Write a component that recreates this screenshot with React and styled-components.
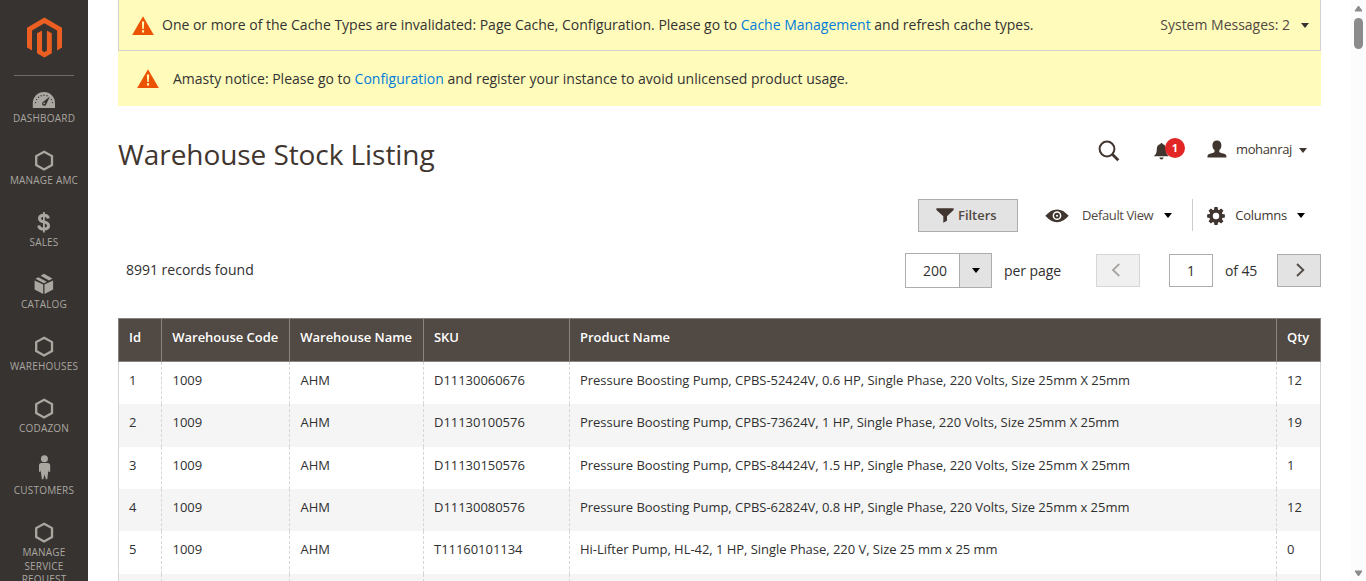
import React from "react";
import styled, { createGlobalStyle } from "styled-components";

const GlobalStyle = createGlobalStyle`
  *, *::before, *::after { box-sizing: border-box; }
  html, body { margin: 0; padding: 0; background: #fff; overflow: hidden; }
  body { font: 400 14px/1.36 "Open Sans", "Noto Sans", sans-serif; color: #41362f; letter-spacing: -0.008px; }
  a { color: #007bdb; text-decoration: none; }
  button { font-family: inherit; }
`;

const Page = styled.div`
  display: flex;
  height: 581px;
  overflow: hidden;
`;

/* Sidebar */

const Sidebar = styled.nav`
  flex: 0 0 88px;
  height: 581px;
  overflow: hidden;
  background: #373330;
`;

const LogoArea = styled.div`
  height: 76px;
  margin: 0 14px;
  padding: 17px 0 0 13px;
  border-bottom: 1px solid #736963;
  svg { display: block; }
`;

const MenuItem = styled.a`
  display: block;
  height: 62px;
  color: #aaa6a0;
  text-align: center;
  svg { display: block; margin: 0 auto; }
`;

const MenuLabel = styled.span`
  display: block;
  padding: 1px 8px 0;
  font-size: 10px;
  letter-spacing: 0.2px;
  line-height: 13.6px;
  text-transform: uppercase;
  white-space: ${(p) => (p.$wrap ? "normal" : "nowrap")};
`;

/* Content */

const Content = styled.main`
  flex: 1;
  min-width: 0;
  padding: 0 30px;
`;

const SystemMessage = styled.div`
  display: flex;
  align-items: center;
  height: 51px;
  padding: 0 11px 0 13px;
  background: #fffbbb;
  border: 1px solid #d1d1d1;
  border-top: 0;
`;

const Notice = styled.div`
  display: flex;
  align-items: center;
  height: 55px;
  padding-left: 19px;
  background: #fffbbb;
`;

const MessageText = styled.span`
  margin-left: ${(p) => p.$gap}px;
  color: #333;
`;

const MessageCount = styled.span`
  display: flex;
  align-items: center;
  gap: 11px;
  margin-left: auto;
  color: #514943;
`;

const Caret = styled.span`
  width: 0;
  height: 0;
  border: 4px solid transparent;
  border-top: 5px solid ${(p) => p.$color || "#000"};
  border-bottom: 0;
`;

const PageHeader = styled.header`
  display: flex;
  height: 92px;
  padding-top: 29px;
`;

const Title = styled.h1`
  margin: 0;
  font-size: 28px;
  font-weight: 400;
  letter-spacing: -0.07px;
  line-height: 38px;
`;

const HeaderTools = styled.div`
  display: flex;
  align-items: center;
  height: 28px;
  margin: 1px 0 0 auto;
  padding-right: 14px;
  font-size: 13px;
  svg { display: block; }
`;

const SearchButton = styled.span`
  margin-top: 2px;
`;

const Notifications = styled.span`
  position: relative;
  width: 31px;
  margin: 2px 22px 0 34px;
`;

const Badge = styled.span`
  position: absolute;
  left: 11px;
  top: -4px;
  width: 20px;
  height: 20px;
  border-radius: 50%;
  background: #e22626;
  color: #fff;
  font-size: 11px;
  font-weight: 700;
  line-height: 20px;
  text-align: center;
`;

const Avatar = styled.span`
  margin-bottom: 2px;
`;

const UserName = styled.span`
  margin: 0 7px 0 9px;
  letter-spacing: -0.35px;
`;

const Toolbar = styled.div`
  display: flex;
  justify-content: flex-end;
  height: 56px;
  padding-top: 1px;
  font-size: 13px;
`;

const FilterButton = styled.button`
  display: flex;
  align-items: center;
  gap: 4px;
  width: 100px;
  height: 33px;
  padding: 0 0 1px 17px;
  border: 1px solid #adadad;
  background: #e3e3e3;
  color: #514943;
  font-size: 13px;
  font-weight: 600;
  letter-spacing: -0.05px;
`;

const ToolbarAction = styled.div`
  display: flex;
  align-items: center;
  height: 33px;
  margin-left: ${(p) => p.$left}px;
  padding-right: ${(p) => p.$right}px;
  color: ${(p) => p.$color};
  letter-spacing: ${(p) => p.$tracking}px;
  svg { margin-right: ${(p) => p.$iconGap}px; }
`;

const ActionCaret = styled(Caret)`
  margin-left: ${(p) => p.$gap}px;
`;

const Divider = styled.div`
  width: 1px;
  height: 32px;
  background: #ccc;
`;

const PagerRow = styled.div`
  display: flex;
  align-items: center;
  height: 33px;
  color: #303030;
`;

const Records = styled.span`
  margin: 0 auto 2px 8px;
`;

const SizeSelect = styled.div`
  display: flex;
  width: 87px;
  height: 35px;
  border: 1px solid #adadad;
  background: #fff;
`;

const SizeValue = styled.span`
  width: 53px;
  padding-left: 17px;
  line-height: 33px;
`;

const SizeToggle = styled.span`
  display: flex;
  flex: 1;
  align-items: center;
  justify-content: center;
  border-left: 1px solid #adadad;
  background: #e3e3e3;
`;

const PerPage = styled.span`
  width: 92px;
  margin-left: 12px;
  letter-spacing: -0.06px;
`;

const PageButton = styled.button`
  display: flex;
  align-items: center;
  justify-content: center;
  width: 44px;
  height: 33px;
  padding: ${(p) => (p.disabled ? "0 4px 1px 0" : "0 0 1px 1px")};
  border: 1px solid ${(p) => (p.disabled ? "#d6d6d6" : "#adadad")};
  background: ${(p) => (p.disabled ? "#f0f0f0" : "#e3e3e3")};
  color: ${(p) => (p.disabled ? "#a8a4a1" : "#514943")};
`;

const PageInput = styled.span`
  width: 44px;
  height: 33px;
  margin-left: 29px;
  border: 1px solid #adadad;
  line-height: 32px;
  text-align: center;
`;

const PageTotal = styled.span`
  width: 52px;
  margin-left: 12px;
  letter-spacing: -0.1px;
`;

const Grid = styled.div`
  margin-top: 31px;
  font-size: 13px;
  letter-spacing: -0.035px;
`;

const Row = styled.div`
  display: grid;
  grid-template-columns: 43px 128px 134px 146px 1fr 45px;
  height: 42.4px;
  background: ${(p) => (p.$even ? "#f5f5f5" : "#fff")};
`;

const HeadRow = styled(Row)`
  height: 43.75px;
  border: 1px solid #8a837f;
  border-width: 1px 0;
  background: #514943;
`;

const HeadCell = styled.span`
  padding: 9px 0 0 10px;
  border-left: 1px solid #8a837f;
  color: #fff;
  font-weight: 600;
  line-height: 18px;
  white-space: nowrap;
  &:nth-child(2), &:nth-child(3) { padding-left: 10.3px; }
  &:last-child { border-right: 1px solid #8a837f; }
`;

const Cell = styled.span`
  padding: 10px 0 0 10px;
  border-left: 1px dashed #d6d6d6;
  color: #303030;
  line-height: 17.7px;
  white-space: nowrap;
  &:first-child { border-left-style: solid; }
  &:nth-child(2), &:nth-child(3) { padding-left: 10.5px; }
  &:last-child { border-right: 1px solid #d6d6d6; }
`;

const Scrollbar = styled.aside`
  display: flex;
  flex: 0 0 15px;
  flex-direction: column;
  align-items: center;
  height: 581px;
  padding: 5px 0 4px;
  background: #fcfcfc;
`;

const Thumb = styled.div`
  width: 9px;
  height: 31px;
  margin: 6px 0 auto;
  border-radius: 5px;
  background: #8b8b8b;
`;

/* Icons */

const Logo = () => (
  <svg width="36" height="41" viewBox="27 17 36 41" fill="#eb5f23">
    <path d="M44.4 17.6 62 27.7V47.6L57.1 50.4V30.6L44.4 23.3 32 30.6V50.4L27 47.6V27.7Z" />
    <path d="M37 33.3 42 30.6V50.6L44.4 52.2 46.9 50.6V30.6L51.8 33.3V53.3L44.4 57.6 37 53.3Z" />
  </svg>
);

const MenuSvg = ({ children }) => (
  <svg width="36" height="35" viewBox="0 0 36 35" fill="currentColor">{children}</svg>
);

const HexIcon = () => (
  <MenuSvg>
    <path d="M18.1 13.7 26 18.1V27L18.1 31.4 10.2 27V18.1Z" fill="none" stroke="currentColor" strokeWidth="2.3" />
  </MenuSvg>
);

const DashboardIcon = () => (
  <MenuSvg>
    <path d="M6.8 32V27.2a11.1 11.1 0 0 1 22.2 0V32Z" />
    <g fill="#373330">
      <circle cx="9.6" cy="26.6" r=".7" />
      <circle cx="10.6" cy="23.6" r=".7" />
      <circle cx="12.6" cy="21.2" r=".7" />
      <circle cx="15.2" cy="19.8" r=".7" />
      <circle cx="18" cy="19.3" r=".7" />
      <circle cx="21" cy="19.8" r=".7" />
      <circle cx="25.4" cy="23.6" r=".7" />
      <circle cx="26.4" cy="26.6" r=".7" />
      <path d="M23.9 20.6 20.2 28.4A2.1 2.1 0 1 1 16.900 26.100Z" />
    </g>
    <circle cx="18.2" cy="27.4" r=".8" />
  </MenuSvg>
);

const SalesIcon = () => (
  <MenuSvg>
    <path
      d="M22.4 18.4C22 16.2 20.3 15.2 17.8 15.2 15.2 15.2 13.5 16.3 13.5 18.4 13.5 20.6 15.4 21.3 17.8 21.9 20.7 22.6 22.6 23.3 22.6 25.8 22.6 28 20.6 29.1 17.8 29.1 15 29.1 13.1 28 12.7 25.4"
      fill="none"
      stroke="currentColor"
      strokeWidth="3"
    />
    <path d="M17 12.1h1.8v20.4H17Z" />
  </MenuSvg>
);

const CatalogIcon = () => (
  <MenuSvg>
    <path d="M8.6 18.4 17.2 22.6V32.1L8.6 27.6Z" />
    <path d="M27.1 18.4 18.5 22.6V32.1L27.1 27.6Z" />
    <path d="M9.4 16.8 12.3 15.2 20.9 19.7 17.9 21.3Z" />
    <path d="M14.6 13.8 17.9 11.8 26.5 16.5 23.1 18.4Z" />
  </MenuSvg>
);

const CustomerIcon = () => (
  <MenuSvg>
    <circle cx="18.4" cy="10.8" r="3.5" />
    <path d="M15.3 15.1h6.4c1.6 0 2.5 1 2.5 2.6v6.1l-1.5.2-.5-2-.2 3-.7 6.2h-1.4l-1.3-4.7-1.3 4.7h-1.4l-.9-6.2-.2-3-.5 2-1.3-.2v-6.1c0-1.6.9-2.6 2.3-2.6Z" />
  </MenuSvg>
);

const WarningIcon = () => (
  <svg width="22" height="19" viewBox="0 0 22 19">
    <path d="M11 .3 21.8 19H.2Z" fill="#eb5202" />
    <path d="M9.9 5.6h2.3l-.4 7.4h-1.5ZM10 14.3h2.1v2.3H10Z" fill="#fffbbb" />
  </svg>
);

const SearchIcon = () => (
  <svg width="22" height="22" viewBox="0 0 22 22" fill="none" stroke="#41362f">
    <circle cx="9" cy="9" r="7.4" strokeWidth="2" />
    <path d="M14.3 14.3 20.3 20.2" strokeWidth="2.8" />
  </svg>
);

const BellIcon = () => (
  <svg width="17" height="18" viewBox="0 0 17 18" fill="#41362f">
    <path d="M7.5 1c.8 0 1 .5 1 1.1 2.6.6 3.5 2.6 3.5 5.2 0 3.600 1 5.300 2.900 6.900H-.1c1.900-1.600 2.900-3.300 2.900-6.900 0-2.600 1-4.600 3.700-5.200 0-.6.200-1.100 1-1.100ZM5.400 15.400h4.200c-.2 1.300-1 2-2.100 2s-1.900-.7-2.100-2Z" />
  </svg>
);

const UserIcon = () => (
  <svg width="20" height="18" viewBox="0 0 20 18" fill="#41362f">
    <path d="M9.9.6c2.8 0 4.500 1.700 4.500 4.600 0 2.200-.8 3.900-2.100 4.900v1.500c0 .6.500.9 1.200 1.100l4.300 1.300c1.100.3 1.700 1.400 1.700 3.600H.4c0-2.200.6-3.300 1.700-3.600l4.300-1.300c.7-.2 1.100-.5 1.100-1.100v-1.500c-1.300-1-2.100-2.700-2.100-4.900C5.400 2.300 7.100.6 9.900.6Z" />
  </svg>
);

const FunnelIcon = () => (
  <svg width="18" height="15" viewBox="0 0 18 15" fill="#41362f">
    <path d="M.4.2h17.200v1.900L11 8.200v4.500L7.300 14.800V8.200L.4 2.100Z" />
  </svg>
);

const EyeIcon = () => (
  <svg width="24" height="14" viewBox="0 0 24 14">
    <path d="M.3 6.8C4 2.600 7.500.4 12 .4S20 2.600 23.700 6.800C20 11 16.500 13.200 12 13.200S4 11 .3 6.800Z" fill="#41362f" />
    <circle cx="12" cy="6.700" r="3.600" fill="none" stroke="#fff" strokeWidth="1.500" />
    <circle cx="12" cy="6.700" r="1" fill="#fff" />
  </svg>
);

const GearIcon = () => (
  <svg width="18" height="18" viewBox="-9 -9 18 18">
    <g fill="#41362f">
      {[0, 45, 90, 135, 180, 225, 270, 315].map((a) => (
        <path key={a} d="M-2.2-5.5-1.6-8.9H1.6L2.2-5.5Z" transform={`rotate(${a})`} />
      ))}
    </g>
    <circle r="4.9" fill="none" stroke="#41362f" strokeWidth="3.4" />
  </svg>
);

const Chevron = ({ d }) => (
  <svg width="10" height="14" viewBox="0 0 10 14" fill="none" stroke="currentColor" strokeWidth="1.8">
    <path d={d} />
  </svg>
);

const ScrollArrow = ({ d }) => (
  <svg width="9" height="7" viewBox="0 0 9 7" fill="#8b8b8b" stroke="#8b8b8b" strokeLinejoin="round">
    <path d={d} />
  </svg>
);

const menu = [
  ["Dashboard", DashboardIcon],
  ["Manage AMC", HexIcon],
  ["Sales", SalesIcon],
  ["Catalog", CatalogIcon],
  ["Warehouses", HexIcon],
  ["Codazon", HexIcon],
  ["Customers", CustomerIcon],
  ["Manage Service Request", HexIcon],
];

const columns = ["Id", "Warehouse Code", "Warehouse Name", "SKU", "Product Name", "Qty"];

const rows = [
  ["1", "1009", "AHM", "D11130060676", "Pressure Boosting Pump, CPBS-52424V, 0.6 HP, Single Phase, 220 Volts, Size 25mm X 25mm", "12"],
  ["2", "1009", "AHM", "D11130100576", "Pressure Boosting Pump, CPBS-73624V, 1 HP, Single Phase, 220 Volts, Size 25mm X 25mm", "19"],
  ["3", "1009", "AHM", "D11130150576", "Pressure Boosting Pump, CPBS-84424V, 1.5 HP, Single Phase, 220 Volts, Size 25mm X 25mm", "1"],
  ["4", "1009", "AHM", "D11130080576", "Pressure Boosting Pump, CPBS-62824V, 0.8 HP, Single Phase, 220 Volts, Size 25mm x 25mm", "12"],
  ["5", "1009", "AHM", "T11160101134", "Hi-Lifter Pump, HL-42, 1 HP, Single Phase, 220 V, Size 25 mm x 25 mm", "0"],
  ["", "", "", "", "", ""],
];

export default function App() {
  return (
    <Page>
      <GlobalStyle />
      <Sidebar>
        <LogoArea><Logo /></LogoArea>
        {menu.map(([label, Icon]) => (
          <MenuItem key={label}>
            <Icon />
            <MenuLabel $wrap={label.length > 12}>{label}</MenuLabel>
          </MenuItem>
        ))}
      </Sidebar>
      <Content>
        <SystemMessage>
          <WarningIcon />
          <MessageText $gap={8}>
            One or more of the Cache Types are invalidated: Page Cache, Configuration. Please go to{" "}
            <a>Cache Management</a> and refresh cache types.
          </MessageText>
          <MessageCount>System Messages: 2 <Caret $color="#333" /></MessageCount>
        </SystemMessage>
        <Notice>
          <WarningIcon />
          <MessageText $gap={14}>
            Amasty notice: Please go to <a>Configuration</a> and register your instance to avoid unlicensed product usage.
          </MessageText>
        </Notice>
        <PageHeader>
          <Title>Warehouse Stock Listing</Title>
          <HeaderTools>
            <SearchButton><SearchIcon /></SearchButton>
            <Notifications>
              <BellIcon />
              <Badge>1</Badge>
            </Notifications>
            <Avatar><UserIcon /></Avatar>
            <UserName>mohanraj</UserName>
            <Caret $color="#41362f" />
          </HeaderTools>
        </PageHeader>
        <Toolbar>
          <FilterButton><FunnelIcon />Filters</FilterButton>
          <ToolbarAction $left={27} $right={20} $iconGap={13} $color="#514943" $tracking={-0.4}>
            <EyeIcon />
            Default View
            <ActionCaret $gap={11} />
          </ToolbarAction>
          <Divider />
          <ToolbarAction $left={14} $right={16} $iconGap={10} $color="#41362f" $tracking={-0.25}>
            <GearIcon />
            Columns
            <ActionCaret $gap={10} />
          </ToolbarAction>
        </Toolbar>
        <PagerRow>
          <Records>8991 records found</Records>
          <SizeSelect>
            <SizeValue>200</SizeValue>
            <SizeToggle><Caret /></SizeToggle>
          </SizeSelect>
          <PerPage>per page</PerPage>
          <PageButton disabled><Chevron d="M8.3 1 2 7 8.3 13" /></PageButton>
          <PageInput>1</PageInput>
          <PageTotal>of 45</PageTotal>
          <PageButton><Chevron d="M2 1 8.3 7 2 13" /></PageButton>
        </PagerRow>
        <Grid>
          <HeadRow>
            {columns.map((c) => <HeadCell key={c}>{c}</HeadCell>)}
          </HeadRow>
          {rows.map((r, i) => (
            <Row key={i} $even={i % 2 === 1}>
              {r.map((v, j) => <Cell key={j}>{v}</Cell>)}
            </Row>
          ))}
        </Grid>
      </Content>
      <Scrollbar>
        <ScrollArrow d="M4.5 1 8 6H1Z" />
        <Thumb />
        <ScrollArrow d="M4.5 6 1 1H8Z" />
      </Scrollbar>
    </Page>
  );
}
